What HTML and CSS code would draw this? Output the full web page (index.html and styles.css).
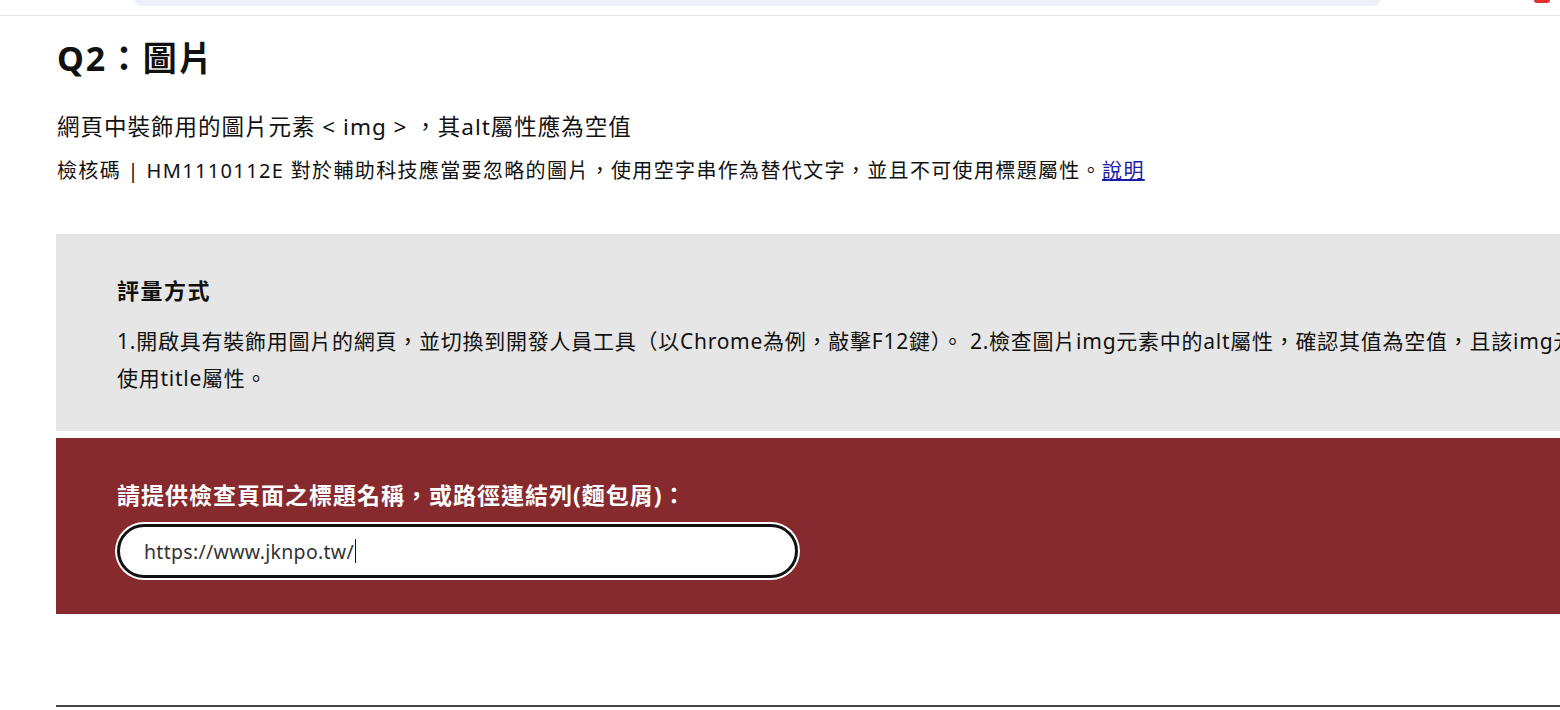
FILE: index.html
```html
<!DOCTYPE html>
<html lang="zh-Hant">
<head>
<meta charset="utf-8">
<title>Q2：圖片</title>
<link rel="stylesheet" href="styles.css">
</head>
<body>
<header class="topbar">
  <div class="topbar-pill"></div>
  <div class="topbar-mark"></div>
</header>
<main class="page">
  <h2 class="q-title">Q2：圖片</h2>
  <p class="q-desc">網頁中裝飾用的圖片元素 &lt; img &gt; ，其alt屬性應為空值</p>
  <p class="q-code">檢核碼 | HM1110112E 對於輔助科技應當要忽略的圖片，使用空字串作為替代文字，並且不可使用標題屬性。<a href="#" class="q-link">說明</a></p>

  <section class="method">
    <h3 class="method-title">評量方式</h3>
    <p class="method-text">1.開啟具有裝飾用圖片的網頁，並切換到開發人員工具（以Chrome為例，敲擊F12鍵）。 2.檢查圖片img元素中的alt屬性，確認其值為空值，且該img元素不可使用title屬性。</p>
  </section>

  <section class="answer">
    <div class="answer-label">請提供檢查頁面之標題名稱，或路徑連結列(麵包屑)：</div>
    <div class="answer-field" role="textbox" aria-label="請提供檢查頁面之標題名稱，或路徑連結列(麵包屑)"><span class="answer-value">https://www.jknpo.tw/</span><span class="caret"></span></div>
  </section>

  <div class="rule"></div>
</main>
</body>
</html>
```

FILE: styles.css
```css
html {
  overflow: hidden;
}
body {
  margin: 0;
  background: #fff;
  color: #111;
  font-family: "Noto Sans", "Noto Sans CJK TC", sans-serif;
}

.topbar {
  display: flex;
  align-items: flex-start;
  height: 15px;
  border-bottom: 1px solid #e3e3e3;
}
.topbar-pill {
  margin-left: 135px;
  width: 1245px;
  height: 6px;
  background: #edf0f8;
  border-radius: 0 0 16px 16px;
}
.topbar-mark {
  margin-left: auto;
  margin-right: 10px;
  width: 16px;
  height: 3px;
  background: #e0332e;
  border-radius: 0 0 3px 3px;
}

.page {
  width: 1660px;
  padding-left: 56px;
}

.q-title {
  margin: 20px 0 0 1px;
  font-size: 34px;
  line-height: 45px;
  font-weight: 700;
  letter-spacing: 1.8px;
}
.q-desc {
  margin: 29px 0 0 1px;
  font-size: 22.5px;
  line-height: 34px;
  letter-spacing: 1px;
}
.q-code {
  margin: 12px 0 0 1px;
  font-size: 20px;
  line-height: 30px;
  letter-spacing: 1.35px;
}
.q-link {
  color: #1b1ba8;
  text-decoration: underline;
}

.method {
  margin-top: 48px;
  background: #e6e6e6;
  padding: 40px 60px 34px 61px;
}
.method-title {
  margin: 0;
  font-size: 22px;
  line-height: 33px;
  font-weight: 700;
  letter-spacing: 1.5px;
}
.method-text {
  margin: 16px 0 0;
  font-size: 21px;
  line-height: 37px;
  letter-spacing: 0.75px;
}

.answer {
  margin-top: 7px;
  background: #862a2d;
  padding: 42px 60px 36px 61px;
}
.answer-label {
  color: #fff;
  font-size: 23px;
  line-height: 30px;
  font-weight: 700;
  letter-spacing: 1px;
}
.answer-field {
  margin: 14px 0 0 0;
  display: flex;
  align-items: center;
  box-sizing: border-box;
  width: 681px;
  height: 54px;
  padding-left: 24px;
  background: #fff;
  border: 3px solid #111;
  border-radius: 27px;
  box-shadow: 0 0 0 2px #fff;
  color: #333;
  font-size: 19.5px;
  letter-spacing: 0.3px;
}
.caret {
  width: 1px;
  height: 24px;
  background: #111;
  margin-left: 1px;
}

.rule {
  margin-top: 91px;
  height: 2px;
  background: #444;
}
```
